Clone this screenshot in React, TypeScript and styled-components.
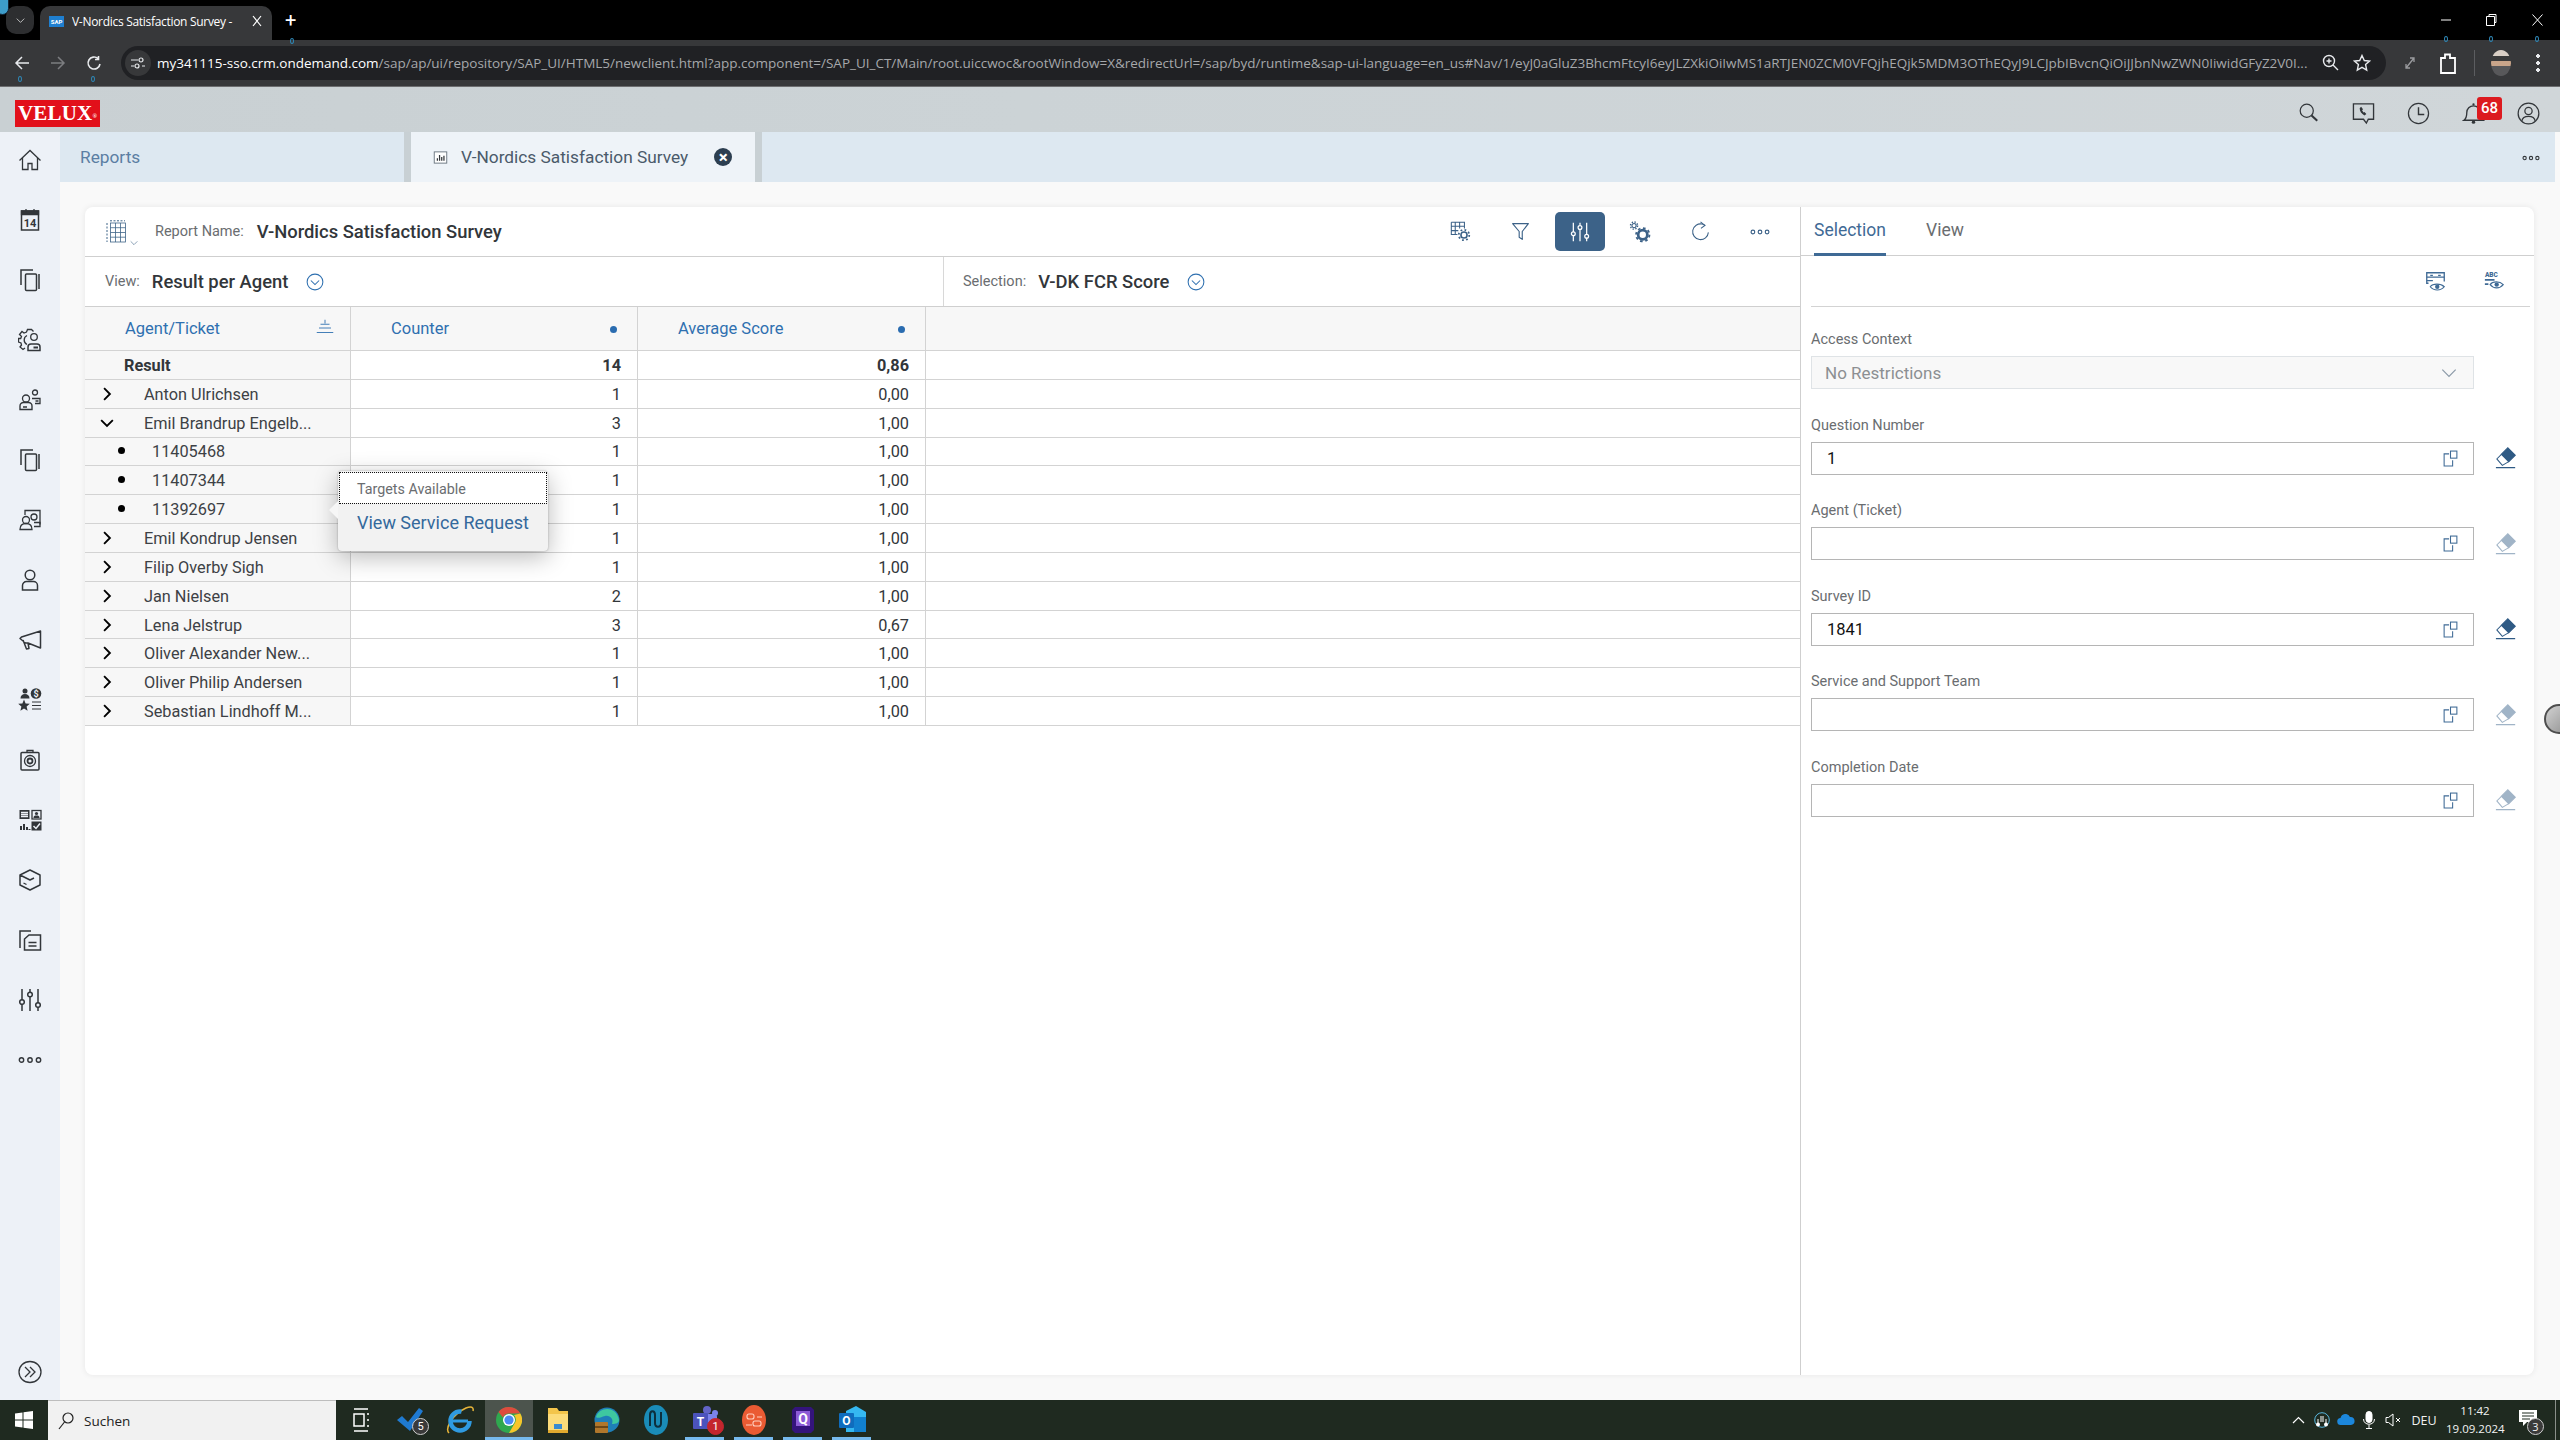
import React from "react";
import styled, { createGlobalStyle } from "styled-components";

const GlobalStyle = createGlobalStyle`
  html, body {
    margin: 0;
    padding: 0;
    width: 2560px;
    height: 1440px;
    overflow: hidden;
    background: #f9f9f9;
    font-family: Roboto, "Liberation Sans", sans-serif;
  }
  * { box-sizing: border-box; }
`;

/* ---------- shared icon shell ---------- */

const Svg = styled.svg<{ $w?: number; $c?: string }>`
  width: ${(p) => p.$w ?? 24}px;
  height: ${(p) => p.$w ?? 24}px;
  flex: none;
  fill: none;
  stroke: ${(p) => p.$c ?? "currentColor"};
  stroke-width: 1.3;
  display: block;
`;

type IconProps = { w?: number; c?: string };

const icon =
  (body: React.ReactNode) =>
  ({ w, c }: IconProps) =>
    (
      <Svg viewBox="0 0 24 24" $w={w} $c={c}>
        {body}
      </Svg>
    );

const HomeIcon = icon(<path d="M1.5 12.5 12 2.5l10.5 10M4.5 10v11.5h5.5v-6h4v6h5.5V10" />);
const CalendarIcon = icon(
  <>
    <rect x="3.5" y="3" width="17" height="19" strokeWidth="1.5" />
    <path d="M3.5 3h17v3.5h-17z" fill="#32363a" />
    <path d="M8 1v3M16 1v3" />
    <text x="12" y="18.5" fontSize="11" fontWeight="700" textAnchor="middle" fill="#32363a" stroke="none" fontFamily="Roboto">
      14
    </text>
  </>
);
const CopiesIcon = icon(
  <>
    <path d="M3 17V2h12M21 6v15" strokeWidth="1.5" />
    <rect x="7.5" y="6" width="11" height="16.5" rx="1" strokeWidth="1.5" />
  </>
);
const GearPersonIcon = icon(
  <>
    <path d="M15.500 3.500 13.500 1.500H9.500L8.500 4 6 5 4 3.500 1.500 6.500l2 2-.8 2H.5V14l2.500 1 .5 2L2 19l3 2.500 2-1.500" />
    <path d="M9 7.500a5 5 0 0 0 0 9" />
    <circle cx="16" cy="9" r="3.300" />
    <path d="M10 22.500v-3.500a3 3 0 0 1 3-3h6a3 3 0 0 1 3 3v3.500z" strokeWidth="1.500" />
    <path d="M15.500 19.500h4.500" strokeWidth="2" />
  </>
);
const PeopleLinesIcon = icon(
  <>
    <circle cx="8" cy="10.500" r="3.500" />
    <path d="M2 21.500v-3.500a3.500 3.500 0 0 1 3.500-3.500h5a3.500 3.500 0 0 1 3.500 3.500v3.500zM5 19h4" strokeWidth="1.400" />
    <circle cx="17" cy="4.500" r="2.500" />
    <path d="M14 10.500h8v5h-5M17.500 13h3" />
  </>
);
const PeopleFrameIcon = icon(
  <>
    <path d="M7 7V2.500h15v14" />
    <circle cx="8" cy="12" r="3.500" />
    <path d="M2 21.500c0-4 2-6 6-6s6 2 6 6z" />
    <circle cx="16" cy="9" r="3" />
    <path d="M16 14.500h6v4h-6" />
  </>
);
const UserIcon = icon(
  <>
    <circle cx="12" cy="7" r="4.800" strokeWidth="1.500" />
    <path d="M4.500 22v-4.500a4 4 0 0 1 4-4h7a4 4 0 0 1 4 4V22z" strokeWidth="1.500" />
  </>
);
const MegaphoneIcon = icon(
  <path d="M22.500 3v17L10 15H7.500L2 10.500 3.500 9zM5 12l3.500 9 2.500-.5-1-5.500" strokeWidth="1.500" strokeLinejoin="round" />
);
const ScoreIcon = icon(
  <>
    <circle cx="7" cy="3" r="2.500" fill="#32363a" stroke="none" />
    <path d="M2.500 10.500c0-3 1.800-4.500 4.500-4.500s4.500 1.500 4.500 4.500z" fill="#32363a" stroke="none" />
    <circle cx="18" cy="5.500" r="5.300" fill="#32363a" stroke="none" />
    <text x="18" y="8.800" fontSize="9" fontWeight="700" textAnchor="middle" fill="#edf1f7" stroke="none" fontFamily="Roboto">
      $
    </text>
    <path d="M6 11.500l1.600 4 4.200.3-3.200 2.800 1 4.200-3.600-2.300-3.600 2.300 1-4.200-3.200-2.800 4.200-.3z" fill="#32363a" stroke="none" />
    <path d="M14 14h9M14 17.500h9M14 21h9" strokeWidth="1" />
  </>
);
const TargetClipIcon = icon(
  <>
    <rect x="3" y="4.500" width="18" height="17.500" rx="1" strokeWidth="1.500" />
    <path d="M9 4.500V2.500h6v2" />
    <circle cx="12" cy="13" r="5.500" />
    <circle cx="12" cy="13" r="2.500" strokeWidth="1.800" />
  </>
);
const TilesIcon = icon(
  <>
    <rect x="1.500" y="2" width="10" height="9" fill="#32363a" stroke="none" />
    <path d="M3 4.500h7M3 6.500h7M3 8.500h7" stroke="#edf1f7" />
    <rect x="14" y="2.500" width="9" height="8.500" />
    <circle cx="18.500" cy="5.500" r="1.600" fill="#32363a" stroke="none" />
    <path d="M15.500 10c0-2 1-2.500 3-2.500s3 .5 3 2.500z" fill="#32363a" stroke="none" />
    <path d="M3 22v-4M6 22v-6M9 22v-3M11.500 22v-1" strokeWidth="2" />
    <rect x="13.500" y="13.500" width="10" height="9" fill="#32363a" stroke="none" />
    <path d="m15.500 18 2.500 2.500 4-5" stroke="#edf1f7" strokeWidth="1.500" />
  </>
);
const BoxIcon = icon(
  <>
    <path d="M12 2 22 7v10l-10 5-10-5V7zM2 7l10 5 4-2" strokeWidth="1.500" strokeLinejoin="round" />
    <path d="M5.500 15l3 1.500" strokeWidth="1.300" />
  </>
);
const DocsIcon = icon(
  <>
    <path d="M2 20V3h11" strokeWidth="1.500" />
    <path d="M11 7h11.500v15H6.500v-11z" strokeWidth="1.500" />
    <path d="M10.500 14.500h8M10.500 18h8" />
  </>
);
const SlidersIcon = icon(
  <>
    <path d="M4 1v11M4 16v7M12 1v3M12 9v14M20 1v14M20 19v4" strokeWidth="1.500" />
    <circle cx="4" cy="14" r="2.300" strokeWidth="1.500" />
    <circle cx="12" cy="6.500" r="2.300" strokeWidth="1.500" />
    <circle cx="20" cy="17" r="2.300" strokeWidth="1.500" />
  </>
);
const DotsIcon = icon(
  <>
    <circle cx="3.500" cy="12" r="2.200" strokeWidth="1.400" />
    <circle cx="12" cy="12" r="2.200" strokeWidth="1.400" />
    <circle cx="20.500" cy="12" r="2.200" strokeWidth="1.400" />
  </>
);
const ExpandIcon = icon(
  <>
    <ellipse cx="12" cy="12" rx="11" ry="10.500" />
    <path d="m7 7 5 5-5 5M12 7l5 5-5 5" />
  </>
);

const SearchIcon = icon(
  <>
    <circle cx="10" cy="10" r="7.500" strokeWidth="1.400" />
    <path d="m15.500 15.500 6.500 6" strokeWidth="2.400" />
  </>
);
const PhoneBubbleIcon = icon(
  <>
    <path d="M1.500 2h21v16H17l-2 4-3-4H1.500z" strokeWidth="1.400" />
    <path d="M9.500 5 8 6.500c0 3 2 6 5 7.500l2-1.500-2-2-1 .5-1.500-2.500 1-1z" fill="currentColor" stroke="none" />
  </>
);
const ClockIcon = icon(
  <>
    <circle cx="12" cy="12" r="10.500" strokeWidth="1.300" />
    <path d="M12 5.500V13h6" strokeWidth="1.500" />
  </>
);
const BellIcon = icon(
  <>
    <path d="M2 19c3-2 3-5 3-8 0-4 3-7 7-7s7 3 7 7c0 3 0 6 3 8z" strokeWidth="1.400" />
    <circle cx="12" cy="21" r="1.800" fill="currentColor" stroke="none" />
    <circle cx="12" cy="2.500" r="1.200" fill="currentColor" stroke="none" />
  </>
);
const ProfileIcon = icon(
  <>
    <circle cx="12" cy="12" r="10.800" strokeWidth="1.300" />
    <circle cx="12" cy="9.500" r="3.800" strokeWidth="1.300" />
    <path d="M5 20c.5-3.500 3-5 7-5s6.500 1.500 7 5" strokeWidth="1.300" />
  </>
);

const GridGearIcon = icon(
  <>
    <path d="M1.500 1.500h15v7M1.500 1.500v14h7M1.500 6h15M1.500 11h8M6 1.500v14M11 1.500v7" strokeWidth="1.200" />
    <circle cx="16" cy="16" r="3.500" strokeWidth="1.800" />
    <circle cx="16" cy="16" r="6" strokeWidth="2" strokeDasharray="2 2.700" />
  </>
);
const FunnelIcon = icon(<path d="M3 3h18l-7 9v9l-3.500-2.500V12z" strokeWidth="1.300" strokeLinejoin="round" />);
const GearsIcon = icon(
  <>
    <circle cx="5.500" cy="5" r="2.300" strokeWidth="1.200" />
    <circle cx="5.500" cy="5" r="3.900" strokeWidth="1.500" strokeDasharray="1.500 1.560" />
    <circle cx="15" cy="15" r="5" strokeWidth="3" />
    <circle cx="15" cy="15" r="7.300" strokeWidth="2" strokeDasharray="2.870 2.870" />
  </>
);
const RefreshIcon = icon(
  <>
    <path d="M21 13a9 9 0 1 1-7-9.500L17.500 5" strokeWidth="1.200" />
    <path d="M12 1l5 4-4.500 3.500" strokeWidth="1.200" />
  </>
);
const TableIcon = icon(
  <>
    <path d="M1 3v19M4 .8h15" strokeWidth="1" strokeDasharray="2 1.500" />
    <rect x="4.500" y="3" width="15" height="19" strokeWidth="0.800" />
    <path d="M4.500 7.700h15M4.500 12.500h15M4.500 17.200h15M9.500 3v19M14.500 3v19" strokeWidth="0.800" />
  </>
);
const SortIcon = icon(<path d="M12 1v5M6 7h12M4 12h16M1 18h22" strokeWidth="1.200" />);
const CircleChevron = icon(
  <>
    <circle cx="12" cy="12" r="10.500" strokeWidth="1.400" />
    <path d="m6.500 10 5.500 5.500 5.500-5.500" strokeWidth="1.400" />
  </>
);
const ChevronRight = icon(<path d="m7 2 10 10L7 22" strokeWidth="3.200" />);
const ChevronDown = icon(<path d="m2 7 10 10L22 7" strokeWidth="3.200" />);
const ThinChevronDown = icon(<path d="m2 7 10 10L22 7" strokeWidth="1.800" />);
const CopyFieldIcon = icon(
  <>
    <path d="M10 5.500H3v17h12v-8" strokeWidth="1.500" />
    <rect x="12" y="1.500" width="9" height="10" strokeWidth="1.500" />
  </>
);
const EraserSvg = styled(Svg)<{ $dim?: boolean }>`
  opacity: ${(p) => (p.$dim ? 0.45 : 1)};
`;
const EraserIcon = ({ dim }: { dim?: boolean }) => (
  <EraserSvg viewBox="0 0 24 24" $w={22} $c="#2f5a84" $dim={dim}>
    <path d="m14 1 8 8-7 7-8-8z" fill="#2f5a84" />
    <path d="M7 8 2 13l6 7 7-4M1 22.500h21" strokeWidth="1.100" />
  </EraserSvg>
);
const VariantEyeIcon = icon(
  <>
    <path d="M4 14H2V2h20v10" strokeWidth="1.500" />
    <path d="M2 7h20M6 5h3M15 5h3M2 11h7" strokeWidth="1.500" />
    <path d="M6 18c3-4 12-4 16 0-4 5-12 5-16 0z" strokeWidth="1.300" />
    <circle cx="14" cy="18" r="2.500" fill="currentColor" stroke="none" />
  </>
);
const AbcEyeIcon = icon(
  <>
    <text x="1" y="7" fontSize="7.500" fontWeight="900" fill="currentColor" stroke="none" fontFamily="Roboto">
      ABC
    </text>
    <path d="M1 10h11M1 15h4" strokeWidth="2" />
    <path d="M7 15.500c3-4 11-4 15 0-4 5-11 5-15 0z" strokeWidth="1.300" />
    <circle cx="14.500" cy="15.500" r="2.500" fill="currentColor" stroke="none" />
  </>
);
const ReportTabIcon = icon(
  <>
    <rect x="2" y="3" width="20" height="18" fill="#fff" stroke="#6b7680" strokeWidth="1.500" />
    <path d="M7 17v-4M10.500 17V8M14 17v-6M17.500 17V9" stroke="#32363a" strokeWidth="2" />
  </>
);

/* ---------- browser chrome ---------- */

const Page = styled.div`
  position: relative;
  width: 2560px;
  height: 1440px;
  display: flex;
  flex-direction: column;
  overflow: hidden;
`;

const TabStrip = styled.div`
  height: 40px;
  background: #000;
  display: flex;
  align-items: flex-end;
  padding-left: 6px;
  color: #fff;
`;

const TabSwitcher = styled.div`
  width: 28px;
  height: 28px;
  margin-bottom: 6px;
  border-radius: 10px;
  background: #2d2e30;
  display: flex;
  align-items: center;
  justify-content: center;
`;

const BrowserTab = styled.div`
  width: 232px;
  height: 34px;
  margin-left: 6px;
  background: #37383a;
  border-radius: 10px 10px 0 0;
  display: flex;
  align-items: center;
  padding: 0 10px 4px 9px;
  font-size: 12.500px;
  white-space: nowrap;
`;

const Favicon = styled.span`
  width: 15px;
  height: 11px;
  background: #1f7fd0;
  color: #fff;
  font-size: 6px;
  font-weight: 700;
  line-height: 11px;
  text-align: center;
  margin-right: 8px;
  flex: none;
`;

const TabTitle = styled.span`
  flex: 1;
  overflow: hidden;
  font-family: "Open Sans", sans-serif;
  font-size: 12px;
  letter-spacing: -0.300px;
`;

const NewTabGlyph = styled.span`
  font-size: 20px;
  margin: 0 0 8px 13px;
  line-height: 24px;
`;

const WindowButtons = styled.div`
  margin-left: auto;
  display: flex;
  height: 40px;
  align-items: center;
`;

const WindowButton = styled.div`
  width: 45.500px;
  display: flex;
  justify-content: center;
`;

const ChromeBar = styled.div`
  height: 47px;
  background: #37383a;
  display: flex;
  align-items: center;
  border-bottom: 1px solid #6c6d6f;
  padding-bottom: 1px;
`;

const NavButton = styled.div<{ $dim?: boolean }>`
  width: 36px;
  display: flex;
  justify-content: center;
  color: ${(p) => (p.$dim ? "#7c7d80" : "#e8eaed")};
`;

const NavGroup = styled.div`
  display: flex;
  padding-left: 4px;
  width: 121px;
`;

const AddressBar = styled.div`
  width: 2265px;
  height: 34px;
  background: #202124;
  border-radius: 17px;
  display: flex;
  align-items: center;
  padding: 0 15px 0 4px;
  font-family: "Open Sans", sans-serif;
  font-size: 13.500px;
  color: #a6a8ab;
  white-space: nowrap;
`;

const SiteChip = styled.div`
  width: 26px;
  height: 26px;
  border-radius: 50%;
  background: #37383a;
  color: #e8eaed;
  display: flex;
  align-items: center;
  justify-content: center;
  margin-right: 6px;
  flex: none;
`;

const UrlText = styled.div`
  width: 2152px;
  overflow: hidden;
  flex: none;
  letter-spacing: -0.010px;
  b {
    color: #fff;
    font-weight: 400;
  }
`;

const AddressTools = styled.div`
  display: flex;
  margin-left: auto;
  gap: 14px;
  color: #e8eaed;
`;

const BrowserTools = styled.div`
  flex: 1;
  display: flex;
  align-items: center;
  color: #e8eaed;
`;

const ToolSlot = styled.div<{ $ml: number }>`
  margin-left: ${(p) => p.$ml}px;
  display: flex;
  align-items: center;
`;

const Avatar = styled.div`
  width: 20px;
  height: 26px;
  border-radius: 50%;
  background: linear-gradient(180deg, #d9cfc5 0 25%, #3a3a3a 25% 42%, #c9a58a 42% 60%, #58585a 60%);
`;

const Separator = styled.div`
  width: 1px;
  height: 26px;
  background: #5c5d60;
`;

const KebabDots = styled.div`
  width: 4px;
  height: 18px;
  background: radial-gradient(circle 2px at 2px 2px, #e8eaed 98%, transparent) 0 0 / 4px 7px;
`;

const Ring = styled.span<{ $x: number; $y: number }>`
  position: absolute;
  left: ${(p) => p.$x}px;
  top: ${(p) => p.$y}px;
  width: 4px;
  height: 6px;
  border: 1px solid #2f86b4;
  border-radius: 50%;
`;

const UBadge = styled.span`
  position: absolute;
  left: -4px;
  top: -5px;
  width: 13px;
  height: 20px;
  border-radius: 0 0 7px 7px;
  background: #3d9cc9;
  border: 1px solid #123;
`;

/* ---------- sap shell ---------- */

const ShellHeader = styled.header`
  height: 45px;
  background: linear-gradient(90deg, #c9d0d3 0, #ccd3d6 40%, #d0d6d9 100%);
  display: flex;
  align-items: center;
  padding: 7px 4px 0 15px;
  color: #32363a;
`;

const Logo = styled.div`
  width: 85px;
  height: 27px;
  background: #e2101a;
  color: #fff;
  font-family: "Liberation Serif", serif;
  font-weight: 700;
  font-size: 21px;
  line-height: 27px;
  text-align: center;
  letter-spacing: 0.200px;
  sup {
    font-size: 6px;
    line-height: 0;
    vertical-align: 2px;
  }
`;

const HeaderActions = styled.div`
  margin-left: auto;
  display: flex;
`;

const HeaderAction = styled.div`
  position: relative;
  width: 55px;
  display: flex;
  justify-content: center;
`;

const CountBadge = styled.span`
  position: absolute;
  left: 31px;
  top: -5px;
  width: 25px;
  height: 23px;
  background: #dc1a1f;
  color: #fff;
  border-radius: 3px;
  font-size: 15px;
  font-weight: 500;
  line-height: 23px;
  text-align: center;
`;

const Workspace = styled.div`
  flex: 1;
  min-height: 0;
  display: flex;
`;

const Sidebar = styled.nav`
  width: 60px;
  background: #edf1f7;
  display: flex;
  flex-direction: column;
  color: #32363a;
`;

const SideItem = styled.div`
  height: 60px;
  display: flex;
  align-items: center;
  justify-content: center;
  flex: none;
  &:first-child {
    margin-top: -2px;
  }
`;

const SideFooter = styled.div`
  margin-top: auto;
  height: 36px;
  margin-bottom: 10px;
  display: flex;
  align-items: center;
  justify-content: center;
`;

const Stage = styled.div`
  flex: 1;
  min-width: 0;
  display: flex;
  flex-direction: column;
`;

const TabBar = styled.div`
  height: 50px;
  margin-right: 5px;
  background: #dde8f1;
  display: flex;
  align-items: stretch;
  flex: none;
`;

const ShellTab = styled.div<{ $active?: boolean }>`
  width: 351px;
  background: ${(p) => (p.$active ? "#eef3f8" : "#dde8f1")};
  border-right: 7px solid #c8d0d4;
  display: flex;
  align-items: center;
  padding-left: ${(p) => (p.$active ? 22 : 20)}px;
  font-size: 17.300px;
  color: ${(p) => (p.$active ? "#4a5a6a" : "#5b7ea3")};
`;

const TabLabel = styled.span`
  margin-left: 13px;
`;

const TabClose = styled.span`
  margin-left: 26px;
  width: 18px;
  height: 18px;
  border-radius: 50%;
  background: #2c3e50;
  color: #fff;
  font-size: 17px;
  font-weight: 700;
  line-height: 18px;
  text-align: center;
`;

const TabOverflow = styled.div`
  margin-left: auto;
  width: 33px;
  display: flex;
  align-items: center;
  color: #32363a;
  padding-top: 1px;
`;

const Content = styled.main`
  flex: 1;
  min-height: 0;
  padding: 25px 26px 25px 25px;
  background: #f9f9f9;
  display: flex;
`;

const Card = styled.section`
  flex: 1;
  background: #fff;
  border-radius: 8px;
  box-shadow: 0 0 6px rgba(0, 0, 0, 0.08);
  display: flex;
  overflow: hidden;
`;

/* ---------- report pane ---------- */

const ReportPane = styled.div`
  width: 1715px;
  display: flex;
  flex-direction: column;
  flex: none;
`;

const ReportBar = styled.div`
  height: 50px;
  border-bottom: 1px solid #cfcfcf;
  display: flex;
  align-items: center;
  padding: 0 15px 0 21px;
  color: #3f6488;
`;

const SmallLabel = styled.span<{ $gap?: number }>`
  font-size: 14.500px;
  color: #6a6d70;
  margin-right: ${(p) => p.$gap ?? 10}px;
`;

const ReportName = styled.span`
  font-size: 18.400px;
  font-weight: 500;
  color: #32363a;
`;

const TableGlyphWrap = styled.div`
  position: relative;
  width: 49px;
  color: #3f6488;
`;

const SmallCaret = styled.span`
  position: absolute;
  left: 24px;
  bottom: -3px;
`;

const ReportTools = styled.div`
  margin-left: auto;
  display: flex;
  gap: 10px;
`;

const ToolButton = styled.div<{ $active?: boolean }>`
  width: 50px;
  height: 39px;
  border-radius: 5px;
  background: ${(p) => (p.$active ? "#3c6288" : "transparent")};
  color: ${(p) => (p.$active ? "#fff" : "#3c6288")};
  display: flex;
  align-items: center;
  justify-content: center;
`;

const ViewBar = styled.div`
  height: 50px;
  border-bottom: 1px solid #cfcfcf;
  display: flex;
`;

const ViewPart = styled.div<{ $w: number }>`
  width: ${(p) => p.$w}px;
  border-right: 1px solid #d8d8d8;
  display: flex;
  align-items: center;
  padding-left: ${(p) => (p.$w > 858 ? 20 : 19)}px;
  color: #2f70b0;
  &:last-child {
    border-right: 0;
  }
`;

const ViewName = styled.span`
  font-size: 18.400px;
  font-weight: 500;
  color: #32363a;
  margin-right: 18px;
`;

const COLS = "266px 287px 288px 1fr";

const HeadRow = styled.div`
  height: 44px;
  display: grid;
  grid-template-columns: ${COLS};
  background: #f7f7f7;
  border-bottom: 1px solid #d3d3d3;
`;

const HeadCell = styled.div<{ $pad: number }>`
  position: relative;
  display: flex;
  align-items: center;
  padding-left: ${(p) => p.$pad}px;
  border-right: 1px solid #d3d3d3;
  color: #2f70b0;
  font-size: 16.500px;
  &:last-child {
    border-right: 0;
  }
`;

const ColumnMark = styled.span`
  position: absolute;
  right: 20px;
  top: 19px;
  width: 7px;
  height: 7px;
  border-radius: 50%;
  background: #2a6cb0;
`;

const SortMark = styled.span`
  position: absolute;
  right: 16px;
  top: 12px;
`;

const BodyRow = styled.div`
  height: 28.850px;
  display: grid;
  grid-template-columns: ${COLS};
  border-bottom: 1px solid #d3d3d3;
  font-size: 16.300px;
  color: #32363a;
`;

const NameCell = styled.div<{ $bold?: boolean }>`
  background: #f7f7f7;
  border-right: 1px solid #d3d3d3;
  display: flex;
  align-items: center;
  padding: 1px 0 0 14px;
  font-weight: ${(p) => (p.$bold ? 700 : 400)};
  color: ${(p) => (p.$bold ? "#32363a" : "#3d4145")};
  white-space: nowrap;
`;

const Toggle = styled.span`
  width: 16px;
  display: flex;
  justify-content: center;
  color: #000;
  margin: -1px 29px 0 0;
`;

const Bullet = styled.span`
  width: 7px;
  height: 7px;
  border-radius: 50%;
  background: #000;
  margin: 0 27px 2px 19px;
`;

const ResultLabel = styled.span`
  margin-left: 25px;
`;

const NumCell = styled.div<{ $bold?: boolean }>`
  border-right: 1px solid #d3d3d3;
  display: flex;
  align-items: center;
  justify-content: flex-end;
  padding: 1px 16px 0 0;
  font-weight: ${(p) => (p.$bold ? 700 : 400)};
`;

const EmptyCell = styled.div``;

const Popover = styled.div`
  position: absolute;
  left: 338px;
  top: 471px;
  width: 210px;
  height: 80px;
  background: #f2f2f2;
  border-radius: 4px;
  box-shadow: 0 6px 24px rgba(0, 0, 0, 0.28), 0 0 2px rgba(0, 0, 0, 0.3);
  z-index: 5;
  &::before {
    content: "";
    position: absolute;
    left: -9px;
    top: 30px;
    border-style: solid;
    border-width: 9px 9px 9px 0;
    border-color: transparent #f6f6f6 transparent transparent;
  }
`;

const PopoverTitle = styled.div`
  margin: 2px 2px 0;
  height: 30px;
  background: #fff;
  outline: 1px dotted #111;
  font-size: 14.300px;
  line-height: 33px;
  padding-left: 17px;
  color: #6a6d70;
`;

const PopoverLink = styled.div`
  padding: 10px 0 0 19px;
  color: #34699c;
  font-size: 18px;
  line-height: 20px;
`;

/* ---------- selection pane ---------- */

const SelectionPane = styled.aside`
  flex: 1;
  border-left: 1px solid #cfcfcf;
  display: flex;
  flex-direction: column;
`;

const PaneTabs = styled.div`
  height: 49px;
  border-bottom: 1px solid #cfcfcf;
  display: flex;
  padding-left: 13px;
  gap: 40px;
`;

const PaneTab = styled.div<{ $active?: boolean }>`
  font-size: 17.500px;
  line-height: 46px;
  height: 49px;
  color: ${(p) => (p.$active ? "#3f6a95" : "#6a6d70")};
  border-bottom: 3px solid ${(p) => (p.$active ? "#3f6a95" : "transparent")};
`;

const PaneActions = styled.div`
  height: 51px;
  margin: 0 8px 21px 10px;
  border-bottom: 1px solid #d3d3d3;
  display: flex;
  justify-content: flex-end;
  align-items: center;
  padding-right: 25px;
  gap: 38px;
  color: #3f6a95;
`;

const Field = styled.div`
  height: 85.500px;
  padding-left: 10px;
  flex: none;
`;

const FieldLabel = styled.div`
  height: 22px;
  margin-bottom: 6px;
  padding-top: 1px;
  font-size: 14.500px;
  line-height: 22px;
  color: #6a6d70;
`;

const FieldRow = styled.div`
  display: flex;
  align-items: center;
`;

const InputBox = styled.div<{ $disabled?: boolean }>`
  width: 663px;
  height: 33px;
  border: 1px solid ${(p) => (p.$disabled ? "#dfe3e6" : "#b5b5b5")};
  background: ${(p) => (p.$disabled ? "#f8f8f8" : "#fff")};
  color: ${(p) => (p.$disabled ? "#8c8f92" : "#111")};
  display: flex;
  align-items: center;
  font-size: ${(p) => (p.$disabled ? 17 : 16.5)}px;
  padding: 0 ${(p) => (p.$disabled ? 16 : 14)}px 0 ${(p) => (p.$disabled ? 13 : 15)}px;
`;

const InputTail = styled.span`
  margin-left: auto;
  color: #3f6a95;
`;

const SelectTail = styled.span`
  margin-left: auto;
  color: #8c9aa8;
`;

const EraseSlot = styled.div`
  width: 64px;
  display: flex;
  justify-content: center;
`;

const EdgeKnob = styled.div`
  position: absolute;
  left: 2544px;
  top: 704px;
  width: 30px;
  height: 30px;
  border-radius: 50%;
  background: linear-gradient(135deg, #d2d2d2, #8e8e8e);
  border: 2px solid #4e4e4e;
  z-index: 6;
`;

/* ---------- windows taskbar ---------- */

const Taskbar = styled.footer`
  height: 40px;
  flex: none;
  background: #1f2a20;
  display: flex;
  align-items: stretch;
  color: #fff;
`;

const StartButton = styled.div`
  width: 48px;
  display: flex;
  align-items: center;
  justify-content: center;
`;

const SearchBox = styled.div`
  width: 288px;
  background: #f1f1f1;
  border-top: 1px solid #bdbdbd;
  display: flex;
  align-items: center;
  padding-left: 10px;
  color: #222;
  font-family: "Open Sans", sans-serif;
  font-size: 13.500px;
  gap: 10px;
`;

const AppRow = styled.div`
  display: flex;
  align-items: stretch;
`;

const AppSlot = styled.div<{ $w: number; $on?: boolean; $open?: boolean }>`
  position: relative;
  width: ${(p) => p.$w}px;
  display: flex;
  align-items: center;
  justify-content: center;
  background: ${(p) => (p.$on ? "#4c544d" : "transparent")};
  &::after {
    content: "";
    display: ${(p) => (p.$open || p.$on ? "block" : "none")};
    position: absolute;
    left: ${(p) => (p.$on ? 0 : 5)}px;
    right: ${(p) => (p.$on ? 0 : 5)}px;
    bottom: 0;
    height: 3px;
    background: #76b9ed;
  }
`;

const AppBadge = styled.span<{ $red?: boolean }>`
  position: absolute;
  left: 27px;
  bottom: 5px;
  width: 17px;
  height: 17px;
  border-radius: 50%;
  background: ${(p) => (p.$red ? "#c4262e" : "#3a3a3a")};
  border: 1px solid ${(p) => (p.$red ? "#c4262e" : "#cfcfcf")};
  color: #fff;
  font-size: 11px;
  line-height: 15px;
  text-align: center;
`;

const Tray = styled.div`
  margin-left: auto;
  display: flex;
  align-items: center;
  color: #f2f2f2;
  font-family: "Open Sans", sans-serif;
`;

const TraySlot = styled.div`
  width: 23.700px;
  display: flex;
  justify-content: center;
`;

const TrayLang = styled.div`
  width: 38px;
  font-size: 12.500px;
  text-align: center;
`;

const TrayClock = styled.div`
  width: 58px;
  margin-left: 3px;
  font-size: 11.500px;
  line-height: 18px;
  text-align: center;
  white-space: nowrap;
`;

const NoticeSlot = styled.div`
  position: relative;
  width: 52px;
  height: 100%;
  display: flex;
  align-items: center;
  justify-content: center;
  padding: 0 4px 4px 0;
  border-right: 1px solid #8a8f8a;
  margin-right: 4px;
`;

const NoticeCount = styled.span`
  position: absolute;
  left: 23px;
  top: 18px;
  width: 17px;
  height: 17px;
  border-radius: 50%;
  background: #3a3a3a;
  border: 1px solid #cfcfcf;
  font-size: 11px;
  line-height: 15px;
  text-align: center;
`;

/* ---------- data ---------- */

type RowKind = "closed" | "open" | "leaf";
type Row = { name: string; kind: RowKind; counter: number; score: string };

const rows: Row[] = [
  { name: "Anton Ulrichsen", kind: "closed", counter: 1, score: "0,00" },
  { name: "Emil Brandrup Engelb...", kind: "open", counter: 3, score: "1,00" },
  { name: "11405468", kind: "leaf", counter: 1, score: "1,00" },
  { name: "11407344", kind: "leaf", counter: 1, score: "1,00" },
  { name: "11392697", kind: "leaf", counter: 1, score: "1,00" },
  { name: "Emil Kondrup Jensen", kind: "closed", counter: 1, score: "1,00" },
  { name: "Filip Overby Sigh", kind: "closed", counter: 1, score: "1,00" },
  { name: "Jan Nielsen", kind: "closed", counter: 2, score: "1,00" },
  { name: "Lena Jelstrup", kind: "closed", counter: 3, score: "0,67" },
  { name: "Oliver Alexander New...", kind: "closed", counter: 1, score: "1,00" },
  { name: "Oliver Philip Andersen", kind: "closed", counter: 1, score: "1,00" },
  { name: "Sebastian Lindhoff M...", kind: "closed", counter: 1, score: "1,00" },
];

const fields = [
  { label: "Question Number", value: "1", active: true },
  { label: "Agent (Ticket)", value: "", active: false },
  { label: "Survey ID", value: "1841", active: true },
  { label: "Service and Support Team", value: "", active: false },
  { label: "Completion Date", value: "", active: false },
];

const sideIcons = [
  HomeIcon,
  CalendarIcon,
  CopiesIcon,
  GearPersonIcon,
  PeopleLinesIcon,
  CopiesIcon,
  PeopleFrameIcon,
  UserIcon,
  MegaphoneIcon,
  ScoreIcon,
  TargetClipIcon,
  TilesIcon,
  BoxIcon,
  DocsIcon,
  SlidersIcon,
  DotsIcon,
];

const URL_PATH =
  "/sap/ap/ui/repository/SAP_UI/HTML5/newclient.html?app.component=/SAP_UI_CT/Main/root.uiccwoc&rootWindow=X&redirectUrl=/sap/byd/runtime&sap-ui-language=en_us#Nav/1/eyJ0aGluZ3BhcmFtcyI6eyJLZXkiOiIwMS1aRTJEN0ZCM0VFQjhEQjk5MDM3OThEQyJ9LCJpbIBvcnQiOiJJbnNwZWN0IiwidGFyZ2V0I...";

/* ---------- small drawn app logos ---------- */

const WinLogo = () => (
  <svg width="18" height="18" viewBox="0 0 18 18" fill="#fff">
    <path d="M0 2.500 7.500 1.500v7H0zM8.500 1.300 18 0v8.500H8.500zM0 9.500h7.500v7L0 15.500zM8.500 9.500H18V18l-9.500-1.300z" />
  </svg>
);

const TaskViewLogo = () => (
  <svg width="18" height="28" viewBox="0 0 18 28" fill="none" stroke="#fff" strokeWidth="1.500">
    <path d="M2 3h14M2 25h14" />
    <rect x="2" y="8" width="10" height="12" />
    <path d="M15 8h2M15 14h2M15 20h2" />
  </svg>
);

const VsLogo = () => (
  <svg width="28" height="28" viewBox="0 0 28 28">
    <path d="m1 14 5-4 6 6L23 2l4 3-13 20z" fill="#1f7ad1" />
  </svg>
);

const IeLogo = () => (
  <svg width="28" height="30" viewBox="0 0 28 30" fill="none">
    <path d="M3 28C-1 24 5 10 20 3c5-2 8-1 7 3" stroke="#e6b53a" strokeWidth="1.500" />
    <circle cx="14" cy="16" r="9.500" stroke="#2f9ae0" strokeWidth="4.500" strokeDasharray="46 14" />
    <path d="M6 16h16" stroke="#2f9ae0" strokeWidth="3" />
  </svg>
);

const ChromeLogo = () => (
  <svg width="26" height="26" viewBox="0 0 26 26">
    <circle cx="13" cy="13" r="13" fill="#2fa84f" />
    <path d="M13 0a13 13 0 0 1 11.300 6.500H13a6.500 6.500 0 0 0-6 4L2.500 5A13 13 0 0 1 13 0z" fill="#dd4b3e" />
    <path d="M24.300 6.500A13 13 0 0 1 13 26l5.500-9.500A6.500 6.500 0 0 0 18 8z" fill="#f7c52b" />
    <circle cx="13" cy="13" r="6" fill="#fff" />
    <circle cx="13" cy="13" r="4.600" fill="#4a8bf5" />
  </svg>
);

const FolderLogo = () => (
  <svg width="24" height="28" viewBox="0 0 24 28">
    <path d="M2 2h9l2 3h9v22H2z" fill="#f3c54b" />
    <path d="M2 8h20v19H2z" fill="#fcdc7a" />
    <path d="M8 18h8v5H8z" fill="#3a8bd0" />
    <path d="M2 24h20v3H2z" fill="#e0a92e" />
  </svg>
);

const EdgeLogo = () => (
  <svg width="26" height="30" viewBox="0 0 26 30">
    <circle cx="13" cy="15" r="12.500" fill="#1f7fb8" />
    <path d="M2 12C5 2 22 0 25 15c0 3-3 4-7 4 2-5-2-9-7-8-4 1-7 3-9 1z" fill="#3ec8a0" />
    <rect x="1" y="17" width="13" height="11" rx="1" fill="#b0772c" />
    <rect x="1" y="21" width="13" height="2" fill="#6d4716" />
  </svg>
);

const RoundAppLogo = () => (
  <svg width="24" height="30" viewBox="0 0 24 30" fill="none">
    <ellipse cx="12" cy="15" rx="12" ry="15" fill="#1a8cb8" />
    <path d="M6 21V10c0-5 5-5 5 0v8c0 5 6 5 6 0V7" stroke="#0c2f3e" strokeWidth="2" />
  </svg>
);

const TeamsLogo = () => (
  <svg width="28" height="30" viewBox="0 0 28 30">
    <circle cx="16" cy="5" r="4" fill="#6264c7" />
    <circle cx="24" cy="8" r="3" fill="#7b83eb" />
    <rect x="12" y="9" width="14" height="15" rx="3" fill="#7b83eb" />
    <rect x="2" y="8" width="15" height="16" rx="1" fill="#4b53bc" />
    <text x="9.500" y="20.500" fontSize="12" fontWeight="700" textAnchor="middle" fill="#fff" fontFamily="Roboto">
      T
    </text>
  </svg>
);

const RedAppLogo = () => (
  <svg width="24" height="30" viewBox="0 0 24 30" fill="none">
    <ellipse cx="12" cy="15" rx="12" ry="15" fill="#ea5b33" />
    <rect x="5" y="9" width="7" height="5" rx="2" stroke="#ffd2c2" strokeWidth="1.100" />
    <rect x="11" y="16" width="8" height="5" rx="2" stroke="#ffd2c2" strokeWidth="1.100" />
    <path d="M4 20h6M15 12h5" stroke="#ffd2c2" strokeWidth="1.100" />
  </svg>
);

const PurpleAppLogo = () => (
  <svg width="22" height="30" viewBox="0 0 22 30">
    <path d="M3 2h16l3 3v20l-3 3H3l-3-3V5z" fill="#34147c" />
    <rect x="4" y="6" width="14" height="15" fill="#8c5bd6" />
    <text x="11" y="19" fontSize="14" fontWeight="700" textAnchor="middle" fill="#fff" fontFamily="Roboto">
      Q
    </text>
  </svg>
);

const OutlookLogo = () => (
  <svg width="28" height="30" viewBox="0 0 28 30">
    <path d="M8 6 18 1l10 6v20H8z" fill="#35b8f1" />
    <path d="M16 12h12v15H16z" fill="#1180cf" />
    <rect x="1" y="8" width="15" height="15" rx="1" fill="#0f6cbd" />
    <text x="8.500" y="20" fontSize="12" fontWeight="700" textAnchor="middle" fill="#fff" fontFamily="Roboto">
      O
    </text>
  </svg>
);

const TrayHeadset = () => (
  <svg width="16" height="16" viewBox="0 0 16 16" fill="none" stroke="#59b7de" strokeWidth="1">
    <circle cx="8" cy="8" r="7.300" />
    <path d="M4 11V7M12 11V7M7 4v6M9 4v6" stroke="#fff" />
    <circle cx="4" cy="12.500" r="2" fill="#fff" stroke="none" />
    <circle cx="12" cy="12.500" r="2" fill="#fff" stroke="none" />
  </svg>
);

const TrayCloud = () => (
  <svg width="18" height="12" viewBox="0 0 18 12">
    <path d="M4 11a3.500 3.500 0 0 1-.5-7 5 5 0 0 1 9.500-1 4 4 0 0 1 1 8z" fill="#1c87dc" />
  </svg>
);

const TrayMic = () => (
  <svg width="14" height="18" viewBox="0 0 14 18" fill="none" stroke="#fff" strokeWidth="1">
    <rect x="4" y="0.500" width="6" height="11" rx="3" fill="#fff" />
    <path d="M1.500 8c0 7 11 7 11 0M7 14v3M4 17.500h6" />
  </svg>
);

const TraySound = () => (
  <svg width="16" height="14" viewBox="0 0 16 14" fill="none" stroke="#fff" strokeWidth="1">
    <path d="M1 4.500h2.500L8 1v12L3.500 9.500H1zM11 5l4 4M15 5l-4 4" />
  </svg>
);

const TrayBubble = () => (
  <svg width="18" height="16" viewBox="0 0 18 16" fill="#fff">
    <path d="M0 0h18v12H8l-4 4v-4H0z" />
    <path d="M3 3h12M3 6h12M3 9h8" stroke="#1f2a20" strokeWidth="1" />
  </svg>
);

const CloseCross = () => (
  <svg width="10" height="12" viewBox="0 0 10 12" stroke="#fff" strokeWidth="1.200">
    <path d="m1 1 8 10M9 1l-8 10" />
  </svg>
);

/* ---------- page ---------- */

const App = () => {
  return (
    <Page>
      <GlobalStyle />
      <UBadge />
      <Ring $x={290} $y={38} />
      <Ring $x={18} $y={76} />
      <Ring $x={91} $y={76} />
      <Ring $x={2444} $y={36} />
      <Ring $x={2489} $y={36} />
      <Ring $x={2535} $y={36} />

      <TabStrip>
        <TabSwitcher>
          <ThinChevronDown w={9} c="#fff" />
        </TabSwitcher>
        <BrowserTab>
          <Favicon>SAP</Favicon>
          <TabTitle>V-Nordics Satisfaction Survey -</TabTitle>
          <CloseCross />
        </BrowserTab>
        <NewTabGlyph>+</NewTabGlyph>
        <WindowButtons>
          <WindowButton>
            <svg width="10" height="10" viewBox="0 0 10 10" stroke="#fff">
              <path d="M0 5h10" />
            </svg>
          </WindowButton>
          <WindowButton>
            <svg width="11" height="12" viewBox="0 0 11 12" fill="none" stroke="#fff">
              <path d="M3 2V.5h7v8H8.500M.5 2.500h8v9h-8z" />
            </svg>
          </WindowButton>
          <WindowButton>
            <svg width="11" height="12" viewBox="0 0 11 12" stroke="#fff">
              <path d="m.5.500 10 11M10.500.500l-10 11" />
            </svg>
          </WindowButton>
        </WindowButtons>
      </TabStrip>

      <ChromeBar>
        <NavGroup>
          <NavButton>
            <svg width="16" height="16" viewBox="0 0 16 16" fill="none" stroke="currentColor" strokeWidth="1.500">
              <path d="M15 8H2M8 2 2 8l6 6" />
            </svg>
          </NavButton>
          <NavButton $dim>
            <svg width="16" height="16" viewBox="0 0 16 16" fill="none" stroke="currentColor" strokeWidth="1.500">
              <path d="M1 8h13M8 2l6 6-6 6" />
            </svg>
          </NavButton>
          <NavButton>
            <svg width="16" height="16" viewBox="0 0 16 16" fill="none" stroke="currentColor" strokeWidth="1.600">
              <path d="M14 9a6 6 0 1 1-2-5.500M12.500 1v3.500H9" />
            </svg>
          </NavButton>
        </NavGroup>
        <AddressBar>
          <SiteChip>
            <svg width="14" height="14" viewBox="0 0 14 14" fill="none" stroke="currentColor" strokeWidth="1.200">
              <path d="M0 4h7M0 10h3M11 10h3" />
              <circle cx="10" cy="4" r="2" />
              <circle cx="6" cy="10" r="2" />
            </svg>
          </SiteChip>
          <UrlText>
            <b>my341115-sso.crm.ondemand.com</b>
            {URL_PATH}
          </UrlText>
          <AddressTools>
            <svg width="17" height="17" viewBox="0 0 17 17" fill="none" stroke="currentColor" strokeWidth="1.400">
              <circle cx="7" cy="7" r="5.500" />
              <path d="m11 11 5 5M4.500 7h5M7 4.500v5" />
            </svg>
            <svg width="18" height="18" viewBox="0 0 18 18" fill="none" stroke="currentColor" strokeWidth="1.400">
              <path d="m9 1.500 2.300 5 5.200.6-3.900 3.500 1.100 5.400L9 13.300 4.300 16l1.100-5.400L1.500 7.100l5.200-.6z" />
            </svg>
          </AddressTools>
        </AddressBar>
        <BrowserTools>
          <ToolSlot $ml={17}>
            <svg width="14" height="16" viewBox="0 0 14 16" fill="none" stroke="#9a9b9e" strokeWidth="1.300">
              <path d="M3 13 11 3M7 3h4v4M3 9v4h4" />
            </svg>
          </ToolSlot>
          <ToolSlot $ml={23}>
            <svg width="16" height="22" viewBox="0 0 16 22" fill="none" stroke="#fff" strokeWidth="1.800">
              <path d="M1 6h4V2.500h5V6h5v15H1z" />
            </svg>
          </ToolSlot>
          <ToolSlot $ml={18}>
            <Separator />
          </ToolSlot>
          <ToolSlot $ml={16}>
            <Avatar />
          </ToolSlot>
          <ToolSlot $ml={25}>
            <KebabDots />
          </ToolSlot>
        </BrowserTools>
      </ChromeBar>

      <ShellHeader>
        <Logo>
          VELUX<sup>®</sup>
        </Logo>
        <HeaderActions>
          <HeaderAction>
            <SearchIcon w={21} />
          </HeaderAction>
          <HeaderAction>
            <PhoneBubbleIcon w={23} />
          </HeaderAction>
          <HeaderAction>
            <ClockIcon w={23} />
          </HeaderAction>
          <HeaderAction>
            <BellIcon w={23} />
            <CountBadge>68</CountBadge>
          </HeaderAction>
          <HeaderAction>
            <ProfileIcon w={23} />
          </HeaderAction>
        </HeaderActions>
      </ShellHeader>

      <Workspace>
        <Sidebar>
          {sideIcons.map((Ico, i) => (
            <SideItem key={i}>
              <Ico w={24} />
            </SideItem>
          ))}
          <SideFooter>
            <ExpandIcon w={24} />
          </SideFooter>
        </Sidebar>

        <Stage>
          <TabBar>
            <ShellTab>Reports</ShellTab>
            <ShellTab $active>
              <ReportTabIcon w={15} />
              <TabLabel>V-Nordics Satisfaction Survey</TabLabel>
              <TabClose>×</TabClose>
            </ShellTab>
            <TabOverflow>
              <DotsIcon w={18} />
            </TabOverflow>
          </TabBar>

          <Content>
            <Card>
              <ReportPane>
                <ReportBar>
                  <TableGlyphWrap>
                    <TableIcon w={24} />
                    <SmallCaret>
                      <ThinChevronDown w={8} />
                    </SmallCaret>
                  </TableGlyphWrap>
                  <SmallLabel $gap={13}>Report Name:</SmallLabel>
                  <ReportName>V-Nordics Satisfaction Survey</ReportName>
                  <ReportTools>
                    <ToolButton>
                      <GridGearIcon w={21} />
                    </ToolButton>
                    <ToolButton>
                      <FunnelIcon w={21} />
                    </ToolButton>
                    <ToolButton $active>
                      <SlidersIcon w={20} />
                    </ToolButton>
                    <ToolButton>
                      <GearsIcon w={22} />
                    </ToolButton>
                    <ToolButton>
                      <RefreshIcon w={21} />
                    </ToolButton>
                    <ToolButton>
                      <DotsIcon w={20} />
                    </ToolButton>
                  </ReportTools>
                </ReportBar>

                <ViewBar>
                  <ViewPart $w={859}>
                    <SmallLabel $gap={12}>View:</SmallLabel>
                    <ViewName>Result per Agent</ViewName>
                    <CircleChevron w={18} />
                  </ViewPart>
                  <ViewPart $w={856}>
                    <SmallLabel $gap={12}>Selection:</SmallLabel>
                    <ViewName>V-DK FCR Score</ViewName>
                    <CircleChevron w={18} />
                  </ViewPart>
                </ViewBar>

                <HeadRow>
                  <HeadCell $pad={40}>
                    Agent/Ticket
                    <SortMark>
                      <SortIcon w={18} />
                    </SortMark>
                  </HeadCell>
                  <HeadCell $pad={40}>
                    Counter
                    <ColumnMark />
                  </HeadCell>
                  <HeadCell $pad={40}>
                    Average Score
                    <ColumnMark />
                  </HeadCell>
                  <HeadCell $pad={0} />
                </HeadRow>

                <BodyRow>
                  <NameCell $bold>
                    <ResultLabel>Result</ResultLabel>
                  </NameCell>
                  <NumCell $bold>14</NumCell>
                  <NumCell $bold>0,86</NumCell>
                  <EmptyCell />
                </BodyRow>

                {rows.map((row) => (
                  <BodyRow key={row.name}>
                    <NameCell>
                      {row.kind === "leaf" ? (
                        <Bullet />
                      ) : (
                        <Toggle>{row.kind === "open" ? <ChevronDown w={14} /> : <ChevronRight w={14} />}</Toggle>
                      )}
                      {row.name}
                    </NameCell>
                    <NumCell>{row.counter}</NumCell>
                    <NumCell>{row.score}</NumCell>
                    <EmptyCell />
                  </BodyRow>
                ))}
              </ReportPane>

              <SelectionPane>
                <PaneTabs>
                  <PaneTab $active>Selection</PaneTab>
                  <PaneTab>View</PaneTab>
                </PaneTabs>
                <PaneActions>
                  <VariantEyeIcon w={21} />
                  <AbcEyeIcon w={21} />
                </PaneActions>
                <Field>
                  <FieldLabel>Access Context</FieldLabel>
                  <FieldRow>
                    <InputBox $disabled>
                      No Restrictions
                      <SelectTail>
                        <ThinChevronDown w={16} />
                      </SelectTail>
                    </InputBox>
                  </FieldRow>
                </Field>
                {fields.map((f) => (
                  <Field key={f.label}>
                    <FieldLabel>{f.label}</FieldLabel>
                    <FieldRow>
                      <InputBox>
                        {f.value}
                        <InputTail>
                          <CopyFieldIcon w={17} />
                        </InputTail>
                      </InputBox>
                      <EraseSlot>
                        <EraserIcon dim={!f.active} />
                      </EraseSlot>
                    </FieldRow>
                  </Field>
                ))}
              </SelectionPane>
            </Card>
          </Content>
        </Stage>
      </Workspace>

      <Popover>
        <PopoverTitle>Targets Available</PopoverTitle>
        <PopoverLink>View Service Request</PopoverLink>
      </Popover>
      <EdgeKnob />

      <Taskbar>
        <StartButton>
          <WinLogo />
        </StartButton>
        <SearchBox>
          <svg width="16" height="18" viewBox="0 0 16 18" fill="none" stroke="#222" strokeWidth="1.200">
            <circle cx="10" cy="6" r="5" />
            <path d="M6.500 10 1 17" />
          </svg>
          Suchen
        </SearchBox>
        <AppRow>
          <AppSlot $w={49}>
            <TaskViewLogo />
          </AppSlot>
          <AppSlot $w={50}>
            <VsLogo />
            <AppBadge>5</AppBadge>
          </AppSlot>
          <AppSlot $w={50}>
            <IeLogo />
          </AppSlot>
          <AppSlot $w={48} $on>
            <ChromeLogo />
          </AppSlot>
          <AppSlot $w={49}>
            <FolderLogo />
          </AppSlot>
          <AppSlot $w={49}>
            <EdgeLogo />
          </AppSlot>
          <AppSlot $w={49}>
            <RoundAppLogo />
          </AppSlot>
          <AppSlot $w={49} $open>
            <TeamsLogo />
            <AppBadge $red>1</AppBadge>
          </AppSlot>
          <AppSlot $w={49} $open>
            <RedAppLogo />
          </AppSlot>
          <AppSlot $w={49} $open>
            <PurpleAppLogo />
          </AppSlot>
          <AppSlot $w={49} $open>
            <OutlookLogo />
          </AppSlot>
        </AppRow>
        <Tray>
          <TraySlot>
            <svg width="13" height="8" viewBox="0 0 13 8" fill="none" stroke="#fff" strokeWidth="1.200">
              <path d="m1 7 5.500-5.500L12 7" />
            </svg>
          </TraySlot>
          <TraySlot>
            <TrayHeadset />
          </TraySlot>
          <TraySlot>
            <TrayCloud />
          </TraySlot>
          <TraySlot>
            <TrayMic />
          </TraySlot>
          <TraySlot>
            <TraySound />
          </TraySlot>
          <TrayLang>DEU</TrayLang>
          <TrayClock>
            11:42
            <br />
            19.09.2024
          </TrayClock>
          <NoticeSlot>
            <TrayBubble />
            <NoticeCount>3</NoticeCount>
          </NoticeSlot>
        </Tray>
      </Taskbar>
    </Page>
  );
};

export default App;
